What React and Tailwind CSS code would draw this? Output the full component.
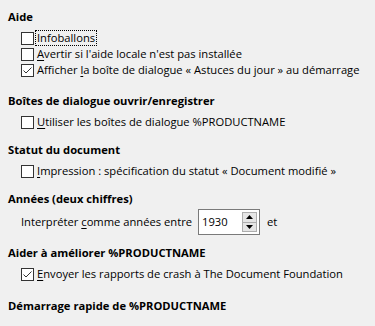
import React from "react";

function Box({ checked }) {
  return (
    <span className="inline-block w-[13px] h-[13px] shrink-0 border border-[#333333] bg-white relative">
      {checked && (
        <svg width="11" height="11" viewBox="0 0 11 11" className="absolute left-0 top-0">
          <polyline points="1.5,5.5 4,8 9.5,2.5" fill="none" stroke="#333333" strokeWidth="1" />
        </svg>
      )}
    </span>
  );
}

function Check({ checked, children, focus }) {
  return (
    <div className="flex items-center h-4 pl-[21px] whitespace-nowrap">
      <Box checked={checked} />
      <span className={"ml-[2px] px-[1px] leading-[14px] " + (focus ? "outline outline-1 outline-dotted outline-black" : "")}>
        {children}
      </span>
    </div>
  );
}

function H({ children, className = "" }) {
  return <div className={"h-4 leading-4 font-bold pl-2 whitespace-nowrap " + className}>{children}</div>;
}

function U({ children }) {
  return <span className="underline underline-offset-2">{children}</span>;
}

export default function App() {
  return (
    <div className="w-[375px] h-[326px] bg-[#f0f0f0] text-black text-[11.2px] pt-[9px] overflow-hidden" style={{ fontFamily: '"Open Sans", sans-serif' }}>
      <H>Aide</H>
      <div className="mt-[5px]">
        <Check focus>Infoballons</Check>
        <Check><U>A</U>vertir si l'aide locale n'est pas installée</Check>
        <Check checked>Afficher <U>l</U>a boîte de dialogue « Astuces du jour » au démarrage</Check>
      </div>
      <H className="mt-[15px]">Boîtes de dialogue ouvrir/enregistrer</H>
      <div className="mt-[5px]">
        <Check><U>U</U>tiliser les boîtes de dialogue %PRODUCTNAME</Check>
      </div>
      <H className="mt-[12px]">Statut du document</H>
      <div className="mt-[5px]">
        <Check><U>I</U>mpression : spécification du statut « Document modifié »</Check>
      </div>
      <H className="mt-[12px]">Années (deux chiffres)</H>
      <div className="mt-[2px] h-[26px] flex items-center pl-[21px] whitespace-nowrap">
        <span>Interpréter <U>c</U>omme années entre</span>
        <div className="ml-[6px] flex items-center w-[62px] h-[26px] border border-[#7a7a7a] bg-white pl-[3px] pr-[2px]">
          <span className="flex-1">1930</span>
          <div className="flex flex-col w-[15px] h-[20px]">
            <div className="flex-1 border border-[#adadad] bg-[#e5e5e5] flex items-center justify-center">
              <svg width="7" height="4" viewBox="0 0 7 4"><polygon points="3.5,0 7,4 0,4" fill="#000" /></svg>
            </div>
            <div className="flex-1 border border-t-0 border-[#adadad] bg-[#e5e5e5] flex items-center justify-center">
              <svg width="7" height="4" viewBox="0 0 7 4"><polygon points="0,0 7,0 3.5,4" fill="#000" /></svg>
            </div>
          </div>
        </div>
        <span className="ml-[7px]">et</span>
      </div>
      <H className="mt-[10px]">Aider à améliorer %PRODUCTNAME</H>
      <div className="mt-[5px]">
        <Check checked><U>E</U>nvoyer les rapports de crash à The Document Foundation</Check>
      </div>
      <H className="mt-[16px]">Démarrage rapide de %PRODUCTNAME</H>
    </div>
  );
}
